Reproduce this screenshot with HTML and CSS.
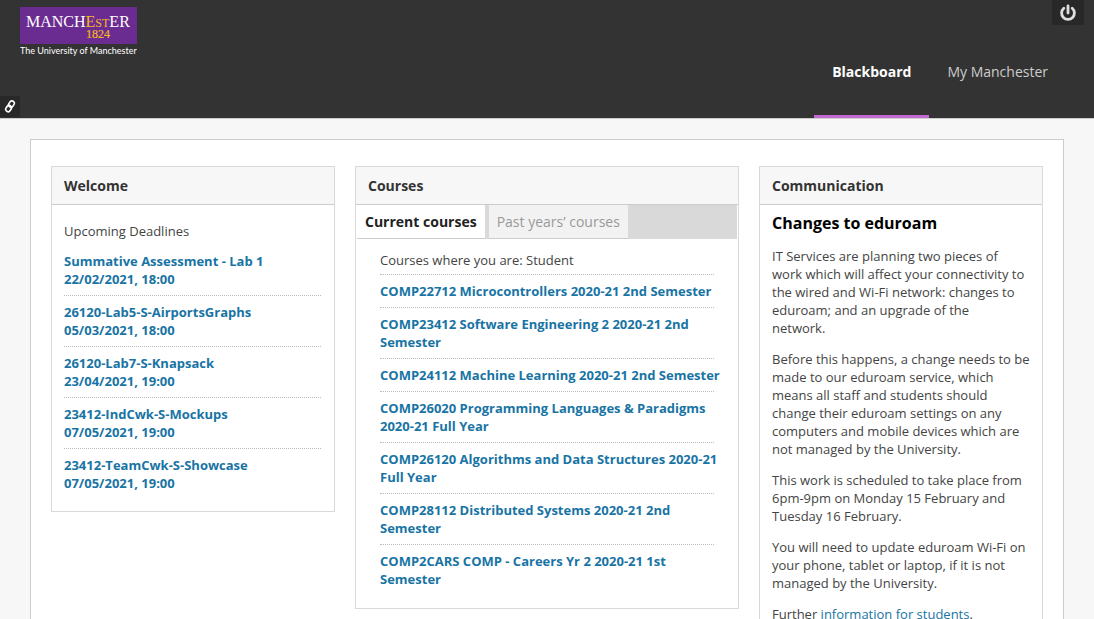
FILE: index.html
```
<!DOCTYPE html>
<html lang="en">
<head>
<meta charset="utf-8">
<title>Blackboard – The University of Manchester</title>
<link rel="stylesheet" href="styles.css">
</head>
<body>
<header class="top">
  <a class="brand" href="#" aria-label="The University of Manchester">
    <svg class="brand-mark" width="117" height="50" viewBox="0 0 117 50">
      <rect width="117" height="37" fill="#6b2c91"/>
      <g font-family="'Liberation Serif', serif" font-size="16" fill="#fff">
        <text x="6" y="20">MANCH<tspan fill="#f5b81c">E</tspan><tspan font-size="12" fill="#f5b81c">ST</tspan>ER</text>
        <text x="66" y="31" font-size="12" fill="#f5b81c" stroke="#f5b81c" stroke-width="0.2">1824</text>
      </g>
      <text x="0" y="47" font-family="Lato, sans-serif" font-size="9" fill="#fff">The University of Manchester</text>
    </svg>
  </a>
  <nav class="tabs">
    <a class="tab tab-active" href="#">Blackboard</a>
    <a class="tab" href="#">My Manchester</a>
  </nav>
  <button class="logout" type="button" aria-label="Logout">
    <svg width="18" height="18" viewBox="0 0 18 18" fill="none" stroke="#dedede" stroke-width="2.8" stroke-linecap="round">
      <path d="M4.8 4.2a6.4 6.4 0 1 0 8.4 0"/>
      <path d="M9 2v7"/>
    </svg>
  </button>
  <button class="quick-links" type="button" aria-label="Quick links">
    <svg width="12" height="14" viewBox="0 0 12 14" fill="none" stroke="#fff" stroke-width="1.6">
      <rect x="5" y="0.8" width="4.8" height="6.6" rx="2.4" transform="rotate(32 7.4 4.1)"/>
      <rect x="2.2" y="5.2" width="4.8" height="6.6" rx="2.4" transform="rotate(32 4.6 8.5)"/>
    </svg>
  </button>
</header>

<main class="page">
  <section class="panel">
    <h2 class="panel-title">Welcome</h2>
    <div class="deadlines">
      <p class="lead">Upcoming Deadlines</p>
      <ul class="links">
        <li><a href="#">Summative Assessment - Lab 1<br>22/02/2021, 18:00</a></li>
        <li><a href="#">26120-Lab5-S-AirportsGraphs<br>05/03/2021, 18:00</a></li>
        <li><a href="#">26120-Lab7-S-Knapsack<br>23/04/2021, 19:00</a></li>
        <li><a href="#">23412-IndCwk-S-Mockups<br>07/05/2021, 19:00</a></li>
        <li><a href="#">23412-TeamCwk-S-Showcase<br>07/05/2021, 19:00</a></li>
      </ul>
    </div>
  </section>

  <section class="panel">
    <h2 class="panel-title">Courses</h2>
    <div class="switch">
      <button class="switch-tab switch-active" type="button">Current courses</button>
      <button class="switch-tab" type="button">Past years’ courses</button>
    </div>
    <div class="courses">
      <p class="role">Courses where you are: Student</p>
      <ul class="links">
        <li><a href="#">COMP22712 Microcontrollers 2020-21 2nd Semester</a></li>
        <li><a href="#">COMP23412 Software Engineering 2 2020-21 2nd Semester</a></li>
        <li><a href="#">COMP24112 Machine Learning 2020-21 2nd Semester</a></li>
        <li><a href="#">COMP26020 Programming Languages &amp; Paradigms 2020-21 Full Year</a></li>
        <li><a href="#">COMP26120 Algorithms and Data Structures 2020-21 Full Year</a></li>
        <li><a href="#">COMP28112 Distributed Systems 2020-21 2nd Semester</a></li>
        <li><a href="#">COMP2CARS COMP - Careers Yr 2 2020-21 1st Semester</a></li>
      </ul>
    </div>
  </section>

  <section class="panel">
    <h2 class="panel-title">Communication</h2>
    <article class="news">
      <h3>Changes to eduroam</h3>
      <p>IT Services are planning two pieces of work which will affect your connectivity to the wired and Wi-Fi network: changes to eduroam; and an upgrade of the<br>network.</p>
      <p>Before this happens, a change needs to be made to our eduroam service, which means all staff and students should change their eduroam settings on any computers and mobile devices which are not managed by the University.</p>
      <p>This work is scheduled to take place from 6pm-9pm on Monday 15 February and Tuesday 16 February.</p>
      <p>You will need to update eduroam Wi-Fi on your phone, tablet or laptop, if it is not managed by the University.</p>
      <p>Further <a href="#">information for students</a>.</p>
    </article>
  </section>
</main>
</body>
</html>
```
FILE: styles.css
```
* { box-sizing: border-box; }

html { scrollbar-width: none; }

body {
  margin: 0;
  background: #f7f7f7;
  color: #444;
  font: 13px/18px "Open Sans", sans-serif;
}

h2, h3, p, ul { margin: 0; padding: 0; }
ul { list-style: none; }
a { color: #1874a4; text-decoration: none; }
button { border: 0; font: inherit; cursor: pointer; }

.top {
  position: relative;
  display: flex;
  justify-content: space-between;
  height: 119px;
  padding: 0 28px 0 20px;
  background: #333;
  border-bottom: 1px solid #ccc;
}

.brand { padding-top: 7px; }
.brand-mark { display: block; }

.tabs { display: flex; }

.tab {
  padding: 62px 18px 0;
  border-bottom: 3px solid transparent;
  color: #ccc;
  font-size: 14px;
  line-height: 20px;
}

.tab-active {
  border-color: #c26ad1;
  color: #fff;
  font-weight: 700;
}

.logout,
.quick-links {
  position: absolute;
  display: grid;
  place-items: center;
  padding: 0;
  background: #282828;
}

.logout { top: 0; right: 10px; width: 32px; height: 25px; }

.quick-links {
  left: 0;
  bottom: 1px;
  width: 20px;
  height: 21px;
  border-top-right-radius: 3px;
}

.page {
  display: grid;
  grid-template-columns: 71fr 96fr 71fr;
  gap: 20px;
  align-items: start;
  margin: 20px 30px;
  padding: 26px 20px;
  background: #fff;
  border: 1px solid #ccc;
}

.panel { border: 1px solid #d9d9d9; }

.panel-title {
  padding: 9px 12px 8px;
  background: #f7f7f7;
  border-bottom: 1px solid #ccc;
  color: #333;
  font-size: 14px;
  line-height: 20px;
}

.deadlines { padding: 17px 13px 12px 12px; }
.lead { margin-bottom: 5px; }

.links li {
  padding: 7px 0;
  border-bottom: 1px dotted #bbb;
  font-weight: 700;
}
.links li:last-child { border-bottom: 0; }

.switch {
  display: flex;
  gap: 4px;
  margin: 0 1px;
  background: #d9d9d9;
}

.switch-tab {
  padding: 7px 8px 6px;
  background: #f2f2f2;
  border-bottom: 1px solid #ccc;
  color: #999;
  font-size: 14px;
  line-height: 20px;
}

.switch-active {
  background: #fff;
  color: #222;
  font-weight: 700;
}

.courses { padding: 12px 24px 13px; }

/* Titles may run slightly past the dotted rules. */
.courses .links a { display: block; margin-right: -12px; }

.role {
  padding-bottom: 5px;
  border-bottom: 1px dotted #bbb;
}

.news { padding: 7px 12px 12px; }
.news h3 { color: #000; font-size: 16px; line-height: 22px; }
.news p { margin-top: 13px; }
```
